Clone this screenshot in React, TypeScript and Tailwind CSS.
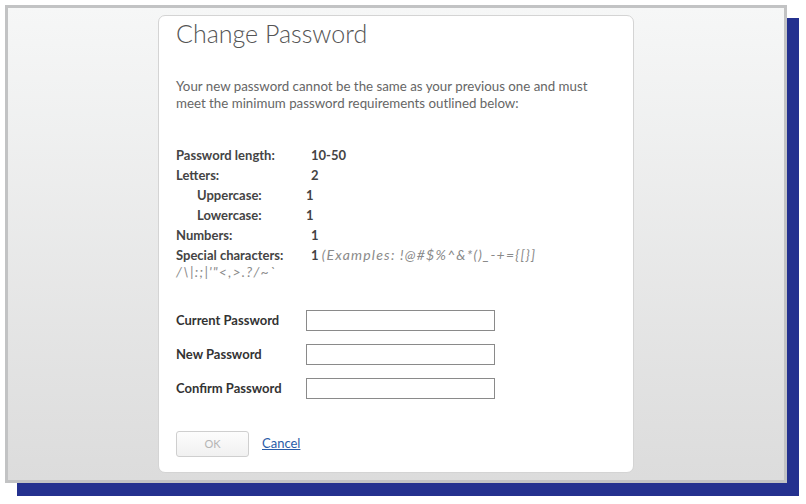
import React from 'react'

const rules = [
  { label: 'Password length:', value: '10-50', indent: false },
  { label: 'Letters:', value: '2', indent: false },
  { label: 'Uppercase:', value: '1', indent: true },
  { label: 'Lowercase:', value: '1', indent: true },
  { label: 'Numbers:', value: '1', indent: false },
]

const fields = ['Current Password', 'New Password', 'Confirm Password']

export default function App() {
  return (
    <div className="w-[806px] h-[504px] bg-white pt-[5px] pl-[5px] font-['Lato',_sans-serif]">
      <div className="w-[782px] h-[478px] border-[3px] border-[#c2c3c4] shadow-[12px_13px_0_0_#24318f] bg-gradient-to-b from-[#f6f7f7] to-[#dcdcdc] flex justify-center pt-[7px]">
        <div className="w-[476px] h-[458px] bg-white border border-[#d4d4d4] rounded-[7px] pl-[17px]">
          <h1 className="text-[25px] leading-[34px] text-[#555] font-light">Change Password</h1>

          <p className="mt-[28px] text-[13.3px] leading-[17px] text-[#666] w-[440px]">
            Your new password cannot be the same as your previous one and must meet the minimum password requirements outlined below:
          </p>

          <div className="mt-[33px] text-[13px] text-[#444] leading-[20px]">
            {rules.map((r) => (
              <div key={r.label} className="flex">
                <span className={`font-bold w-[135px] ${r.indent ? 'pl-[21px]' : ''}`}>{r.label}</span>
                <span className={`font-bold ${r.indent ? '-ml-[5px]' : ''}`}>{r.value}</span>
              </div>
            ))}
            <div className="flex">
              <span className="font-bold w-[135px] shrink-0">Special characters:</span>
              <span className="font-bold">1&nbsp;</span>
              <span className="italic text-[#8a8a8a] text-[14px] tracking-[1.2px] whitespace-nowrap">(Examples: !@#$%^&amp;*()_-+={'{'}[{'}'}]</span>
            </div>
            <div className="italic text-[#8a8a8a] text-[14px] tracking-[1.2px] leading-[14px]">/\|:;|'"&lt;,&gt;.?/~`</div>
          </div>

          <div className="mt-[31px] flex flex-col gap-[13px]">
            {fields.map((f) => (
              <div key={f} className="flex items-center">
                <label className="w-[130px] text-[13px] font-bold text-[#333]">{f}</label>
                <input type="password" className="w-[189px] h-[21px] border border-[#8a8a8a] bg-white" />
              </div>
            ))}
          </div>

          <div className="mt-[32px] flex items-center">
            <button className="w-[73px] h-[26px] border border-[#cfcfcf] rounded-[3px] bg-gradient-to-b from-[#fdfdfd] to-[#f1f1f1] text-[11px] text-[#b5b5b5]">
              OK
            </button>
            <a href="#" className="ml-[13px] text-[13px] text-[#2a5ca8] underline">Cancel</a>
          </div>
        </div>
      </div>
    </div>
  )
}
